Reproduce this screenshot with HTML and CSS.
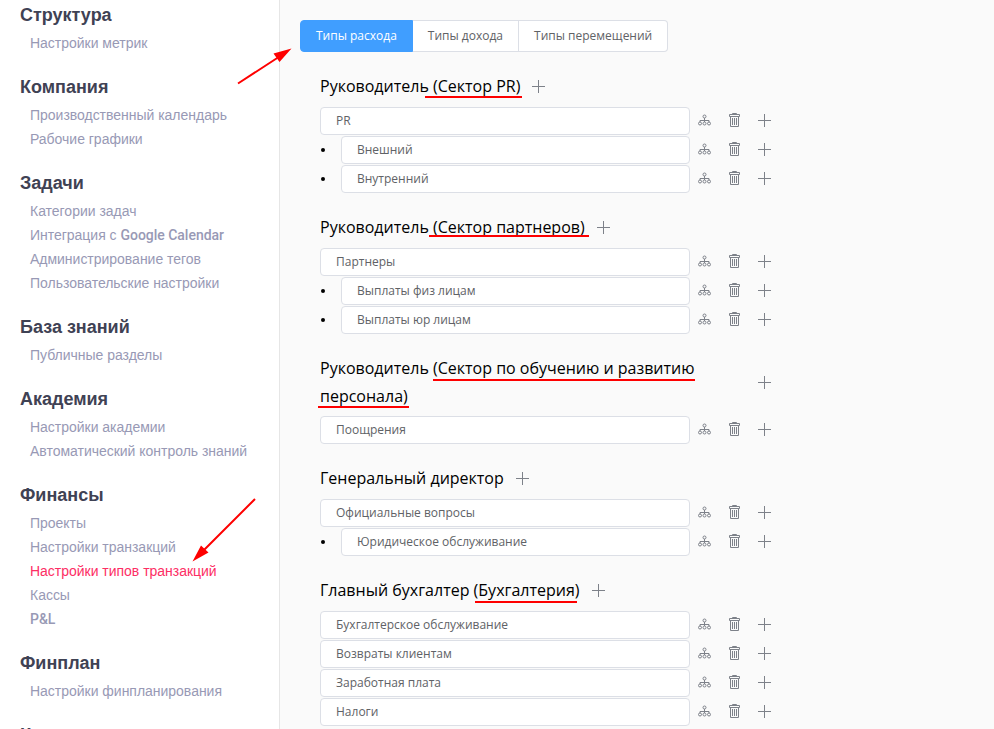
FILE: index.html
```html
<!DOCTYPE html>
<html lang="ru">
<head>
    <title>Настройки типов транзакций</title>
    <meta charset="utf-8">
    <meta name="viewport" content="width=device-width, initial-scale=1">
    <link rel="stylesheet" href="styles.css">
</head>
<body>
    <svg class="sprite">
        <symbol id="icon-tree" viewBox="0 0 14 14">
            <circle cx="6.5" cy="3.5" r="1.5"/>
            <circle cx="2" cy="10.5" r="1.5"/>
            <circle cx="6.5" cy="10.5" r="1.5"/>
            <circle cx="11" cy="10.5" r="1.5"/>
            <path d="M6.500 5v4M2 9V7.500h9V9"/>
        </symbol>
        <symbol id="icon-trash" viewBox="0 0 14 16">
            <path d="M2.500 4.500h8v10h-8zM1.500 2.500h10v2h-10zM4.500 2.500v-1h4v1M4.500 6v7M6.500 6v7M8.500 6v7"/>
        </symbol>
        <symbol id="icon-plus" viewBox="0 0 14 14">
            <path d="M6.500 .5v13M0 7.500h13"/>
        </symbol>
    </svg>

    <div class="page">
        <nav class="sidebar">
            <div class="menu-group">
                <h2>Структура</h2>
                <a>Настройки метрик</a>
            </div>
            <div class="menu-group">
                <h2>Компания</h2>
                <a>Производственный календарь</a>
                <a>Рабочие графики</a>
            </div>
            <div class="menu-group">
                <h2>Задачи</h2>
                <a>Категории задач</a>
                <a>Интеграция с <span class="latin">Google Calendar</span></a>
                <a>Администрирование тегов</a>
                <a>Пользовательские настройки</a>
            </div>
            <div class="menu-group">
                <h2>База знаний</h2>
                <a>Публичные разделы</a>
            </div>
            <div class="menu-group">
                <h2>Академия</h2>
                <a>Настройки академии</a>
                <a>Автоматический контроль знаний</a>
            </div>
            <div class="menu-group">
                <h2>Финансы</h2>
                <a>Проекты</a>
                <a>Настройки транзакций</a>
                <a class="active">Настройки типов транзакций</a>
                <a>Кассы</a>
                <a><span class="latin">P&amp;L</span></a>
            </div>
            <div class="menu-group">
                <h2>Финплан</h2>
                <a>Настройки финпланирования</a>
            </div>
            <div class="menu-group">
                <h2>Клиенты</h2>
            </div>
        </nav>

        <main class="content">
            <div class="tabs">
                <button class="tab active">Типы расхода</button>
                <button class="tab">Типы дохода</button>
                <button class="tab">Типы перемещений</button>
            </div>

            <section class="section">
                <div class="section-title"><span>Руководитель (Сектор PR)</span><svg class="icon plus"><use href="#icon-plus"/></svg></div>
                <div class="row"><div class="field">PR</div><svg class="icon tree"><use href="#icon-tree"/></svg><svg class="icon trash"><use href="#icon-trash"/></svg><svg class="icon plus"><use href="#icon-plus"/></svg></div>
                <div class="row child"><div class="field">Внешний</div><svg class="icon tree"><use href="#icon-tree"/></svg><svg class="icon trash"><use href="#icon-trash"/></svg><svg class="icon plus"><use href="#icon-plus"/></svg></div>
                <div class="row child"><div class="field">Внутренний</div><svg class="icon tree"><use href="#icon-tree"/></svg><svg class="icon trash"><use href="#icon-trash"/></svg><svg class="icon plus"><use href="#icon-plus"/></svg></div>
            </section>

            <section class="section">
                <div class="section-title"><span>Руководитель (Сектор партнеров)</span><svg class="icon plus"><use href="#icon-plus"/></svg></div>
                <div class="row"><div class="field">Партнеры</div><svg class="icon tree"><use href="#icon-tree"/></svg><svg class="icon trash"><use href="#icon-trash"/></svg><svg class="icon plus"><use href="#icon-plus"/></svg></div>
                <div class="row child"><div class="field">Выплаты физ лицам</div><svg class="icon tree"><use href="#icon-tree"/></svg><svg class="icon trash"><use href="#icon-trash"/></svg><svg class="icon plus"><use href="#icon-plus"/></svg></div>
                <div class="row child"><div class="field">Выплаты юр лицам</div><svg class="icon tree"><use href="#icon-tree"/></svg><svg class="icon trash"><use href="#icon-trash"/></svg><svg class="icon plus"><use href="#icon-plus"/></svg></div>
            </section>

            <section class="section">
                <div class="section-title"><span>Руководитель (Сектор по обучению и развитию персонала)</span><svg class="icon plus"><use href="#icon-plus"/></svg></div>
                <div class="row"><div class="field">Поощрения</div><svg class="icon tree"><use href="#icon-tree"/></svg><svg class="icon trash"><use href="#icon-trash"/></svg><svg class="icon plus"><use href="#icon-plus"/></svg></div>
            </section>

            <section class="section">
                <div class="section-title"><span>Генеральный директор</span><svg class="icon plus"><use href="#icon-plus"/></svg></div>
                <div class="row"><div class="field">Официальные вопросы</div><svg class="icon tree"><use href="#icon-tree"/></svg><svg class="icon trash"><use href="#icon-trash"/></svg><svg class="icon plus"><use href="#icon-plus"/></svg></div>
                <div class="row child"><div class="field">Юридическое обслуживание</div><svg class="icon tree"><use href="#icon-tree"/></svg><svg class="icon trash"><use href="#icon-trash"/></svg><svg class="icon plus"><use href="#icon-plus"/></svg></div>
            </section>

            <section class="section">
                <div class="section-title"><span>Главный бухгалтер (Бухгалтерия)</span><svg class="icon plus"><use href="#icon-plus"/></svg></div>
                <div class="row"><div class="field">Бухгалтерское обслуживание</div><svg class="icon tree"><use href="#icon-tree"/></svg><svg class="icon trash"><use href="#icon-trash"/></svg><svg class="icon plus"><use href="#icon-plus"/></svg></div>
                <div class="row"><div class="field">Возвраты клиентам</div><svg class="icon tree"><use href="#icon-tree"/></svg><svg class="icon trash"><use href="#icon-trash"/></svg><svg class="icon plus"><use href="#icon-plus"/></svg></div>
                <div class="row"><div class="field">Заработная плата</div><svg class="icon tree"><use href="#icon-tree"/></svg><svg class="icon trash"><use href="#icon-trash"/></svg><svg class="icon plus"><use href="#icon-plus"/></svg></div>
                <div class="row"><div class="field">Налоги</div><svg class="icon tree"><use href="#icon-tree"/></svg><svg class="icon trash"><use href="#icon-trash"/></svg><svg class="icon plus"><use href="#icon-plus"/></svg></div>
            </section>
        </main>

        <!-- red arrows and underlines over the page -->
        <svg class="marks" viewBox="0 0 994 729">
            <path class="line" d="M238 83.5L278 57.5M255 499L204 550"/>
            <path class="head" d="M291.500 48.500L279.500 62L273.500 53.500zM192.500 561.500L201 545.500L208.500 552.500z"/>
            <path class="line" d="M425 97h97M429 236h160M433 380h262M318 407h91M475 602h102"/>
        </svg>
    </div>
</body>
</html>
```

FILE: styles.css
```css
body {
    margin: 0;
    height: 729px;
    overflow: hidden;
    background: #fafafa;
    font-family: 'Open Sans', sans-serif;
}
.sprite {
    display: none;
}
.page {
    position: relative;
    display: flex;
    height: 729px;
    overflow: hidden;
}
.sidebar {
    box-sizing: border-box;
    flex: none;
    width: 280px;
    padding-left: 20px;
    background: #fff;
    border-right: 1px solid #e6e6e6;
    font-family: 'Liberation Sans', Arial, sans-serif;
}
.menu-group {
    margin: -1px 0 17px;
}
.menu-group h2 {
    margin: 0;
    font-size: 18px;
    line-height: 32px;
    color: #3f4254;
}
.menu-group a {
    display: block;
    padding-left: 10px;
    font-size: 14px;
    line-height: 24px;
    letter-spacing: -0.02px;
    color: #9899b5;
}
.menu-group a.active {
    color: #fd2e64;
}
.latin {
    font-family: Roboto, sans-serif;
    font-weight: 500;
}
.content {
    padding: 20px 0 0 20px;
}
.tabs {
    display: flex;
    margin-bottom: 20px;
}
.tab {
    box-sizing: border-box;
    height: 32px;
    padding: 0 15px 2px;
    border: 1px solid #dcdfe6;
    border-left: 0;
    background: #fff;
    color: #606266;
    font-family: inherit;
    font-size: 12px;
}
.tab:first-child {
    border-radius: 4px 0 0 4px;
}
.tab:last-child {
    border-radius: 0 4px 4px 0;
}
.tab.active {
    background: #409eff;
    border: 1px solid #409eff;
    color: #fff;
}
.section {
    width: 460px;
    margin: 0 0 20px 20px;
}
.row {
    display: flex;
    align-items: center;
    margin-bottom: 1px;
}
.row:last-child {
    margin-bottom: 0;
}
.field {
    box-sizing: border-box;
    width: 370px;
    height: 28px;
    padding: 0 15px;
    border: 1px solid #dcdfe6;
    border-radius: 4px;
    background: #fff;
    color: #606266;
    font-size: 12px;
    line-height: 26px;
}
.child .field {
    width: 349px;
}
.child::before {
    content: '';
    width: 4px;
    height: 4px;
    margin: 0 16px 0 1px;
    border-radius: 50%;
    background: #000;
}
.icon {
    flex: none;
    width: 14px;
    height: 14px;
    margin: 0 8px 2px;
    fill: none;
    stroke: #7d8189;
}
.trash {
    height: 16px;
}
.plus {
    shape-rendering: crispEdges;
}
.section-title {
    display: flex;
    align-items: center;
    min-height: 29px;
    margin-bottom: 6px;
    font-size: 16px;
    line-height: 28px;
    color: #000;
}
.section-title span {
    align-self: flex-start;
}
.section-title .icon {
    margin: 0 8px 1px 12px;
}
.marks {
    position: absolute;
    top: 0;
    left: 0;
    width: 994px;
    height: 729px;
}
.marks .line {
    fill: none;
    stroke: #fe0000;
    stroke-width: 2;
}
.marks .head {
    fill: #fe0000;
}
```
